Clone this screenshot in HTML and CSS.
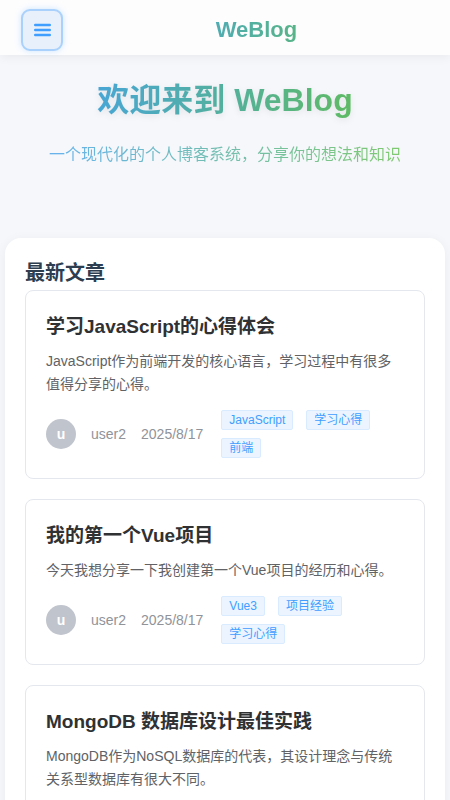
FILE: index.html
```html
<!DOCTYPE html>
<html lang="zh-CN">
<head>
<meta charset="utf-8">
<title>WeBlog</title>
<link rel="stylesheet" href="styles.css">
</head>
<body>
<header class="topbar">
  <button class="menu-btn" aria-label="menu">
    <svg width="17" height="14" viewBox="0 0 17 14"><path d="M1.2 2h14.6M1.2 7h14.6M1.2 12h14.6" stroke="#409eff" stroke-width="2.4" stroke-linecap="round" fill="none"/></svg>
  </button>
  <div class="brand">WeBlog</div>
</header>

<section class="hero">
  <h1 class="hero-title">欢迎来到 WeBlog</h1>
  <p class="hero-sub">一个现代化的个人博客系统，分享你的想法和知识</p>
</section>

<main class="panel">
  <h2 class="panel-title">最新文章</h2>
  <div class="post-list">
    <article class="post">
      <h3 class="post-title">学习JavaScript的心得体会</h3>
      <p class="post-desc">JavaScript作为前端开发的核心语言，学习过程中有很多值得分享的心得。</p>
      <div class="post-meta">
        <span class="avatar">u</span>
        <span class="meta-text">user2</span>
        <span class="meta-text">2025/8/17</span>
        <div class="tags">
          <span class="tag">JavaScript</span>
          <span class="tag">学习心得</span>
          <span class="tag">前端</span>
        </div>
      </div>
    </article>
    <article class="post">
      <h3 class="post-title">我的第一个Vue项目</h3>
      <p class="post-desc">今天我想分享一下我创建第一个Vue项目的经历和心得。</p>
      <div class="post-meta">
        <span class="avatar">u</span>
        <span class="meta-text">user2</span>
        <span class="meta-text">2025/8/17</span>
        <div class="tags">
          <span class="tag">Vue3</span>
          <span class="tag">项目经验</span>
          <span class="tag">学习心得</span>
        </div>
      </div>
    </article>
    <article class="post">
      <h3 class="post-title">MongoDB 数据库设计最佳实践</h3>
      <p class="post-desc">MongoDB作为NoSQL数据库的代表，其设计理念与传统关系型数据库有很大不同。</p>
      <div class="post-meta">
        <span class="avatar">u</span>
        <span class="meta-text">user2</span>
        <span class="meta-text">2025/8/17</span>
        <div class="tags">
          <span class="tag">MongoDB</span>
          <span class="tag">数据库</span>
        </div>
      </div>
    </article>
  </div>
</main>
</body>
</html>
```

FILE: styles.css
```css
* { box-sizing: border-box; }

body {
  margin: 0;
  background: #f5f7fa;
  font-family: "Liberation Sans", "Noto Sans CJK SC", sans-serif;
  color: #303133;
}

.topbar {
  height: 55px;
  padding: 5px 0 0 21px;
  display: flex;
  align-items: center;
  background: #fdfdfe;
  box-shadow: 0 2px 10px rgba(0, 0, 0, 0.06);
  position: relative;
  z-index: 1;
}

.menu-btn {
  width: 42px;
  height: 42px;
  flex-shrink: 0;
  border: 2px solid #a9d1fb;
  border-radius: 9px;
  background: #e7f0fb;
  box-shadow: 0 0 6px rgba(64, 158, 255, 0.25);
  display: flex;
  align-items: center;
  justify-content: center;
  padding: 0;
}

.brand {
  flex: 1;
  text-align: center;
  font-size: 22px;
  font-weight: bold;
  background: linear-gradient(90deg, #409eff, #67c23a);
  -webkit-background-clip: text;
  background-clip: text;
  color: transparent;
}

.hero {
  padding: 26px 0 71px;
  text-align: center;
}

.hero-title {
  margin: 0 0 24px;
  font-size: 32px;
  line-height: 38px;
  font-weight: bold;
  background: linear-gradient(90deg, #409eff, #67c23a);
  -webkit-background-clip: text;
  background-clip: text;
  color: transparent;
  filter: drop-shadow(0 2px 3px rgba(0, 0, 0, 0.08));
}

.hero-sub {
  margin: 0;
  font-size: 16px;
  line-height: 24px;
  background: linear-gradient(90deg, #409eff, #67c23a);
  -webkit-background-clip: text;
  background-clip: text;
  color: transparent;
  opacity: 0.8;
}

.panel {
  margin: 0 5px;
  background: #fff;
  border-radius: 16px;
  padding: 20px;
  box-shadow: 0 2px 12px rgba(0, 0, 0, 0.05);
}

.panel-title {
  margin: 0 0 2px;
  font-size: 20px;
  line-height: 30px;
  font-weight: bold;
  color: #2c3e50;
}

.post-list {
  display: flex;
  flex-direction: column;
  gap: 20px;
}

.post {
  border: 1px solid #e4e7ed;
  border-radius: 8px;
  padding: 20px;
  background: #fff;
}

.post-title {
  margin: 0 0 7px;
  font-size: 19px;
  line-height: 32px;
  font-weight: bold;
  color: #303133;
}

.post-desc {
  margin: 0 0 14px;
  font-size: 14px;
  line-height: 23px;
  color: #606266;
}

.post-meta {
  display: flex;
  align-items: center;
  gap: 15px;
  font-size: 14px;
}

.avatar {
  width: 30px;
  height: 30px;
  flex-shrink: 0;
  border-radius: 50%;
  background: #c0c4cc;
  color: #fff;
  font-weight: bold;
  font-size: 14px;
  display: flex;
  align-items: center;
  justify-content: center;
}

.meta-text {
  color: #909399;
  white-space: nowrap;
}

.tags {
  flex: 1;
  min-width: 0;
  margin-left: 3px;
  display: flex;
  flex-wrap: wrap;
  gap: 8px 13px;
}

.tag {
  height: 20px;
  padding: 0 7px;
  font-size: 12px;
  line-height: 18px;
  color: #409eff;
  background: #ecf5ff;
  border: 1px solid #d9ecff;
  border-radius: 2px;
  white-space: nowrap;
}
```
